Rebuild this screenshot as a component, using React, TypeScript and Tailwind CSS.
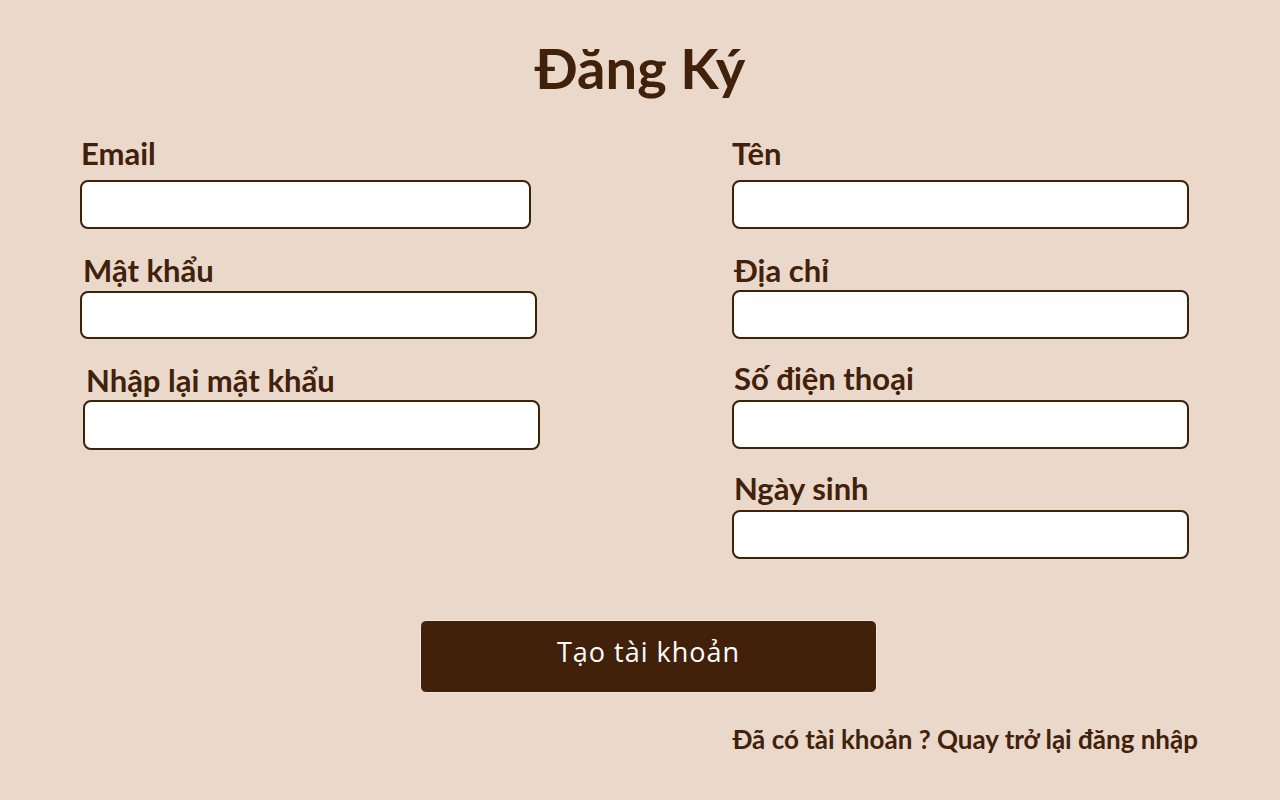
const leftFields = [
  { label: "Email", labelCls: "ml-[1px]", inputCls: "mt-[9px] h-[49px] w-[451px]" },
  { label: "Mật khẩu", labelCls: "mt-[23px] ml-[3px]", inputCls: "mt-[3px] h-[48px] w-[457px]" },
  { label: "Nhập lại mật khẩu", labelCls: "mt-[23px] ml-[6px]", inputCls: "mt-[2px] ml-[3px] h-[50px] w-[457px]" },
];

const rightFields = [
  { label: "Tên", labelCls: "", inputCls: "mt-[9px] h-[49px] w-[457px]" },
  { label: "Địa chỉ", labelCls: "mt-[23px] ml-[2px]", inputCls: "mt-[2px] h-[49px] w-[457px]" },
  { label: "Số điện thoại", labelCls: "mt-[21px] ml-[2px]", inputCls: "mt-[4px] h-[49px] w-[457px]" },
  { label: "Ngày sinh", labelCls: "mt-[21px] ml-[2px]", inputCls: "mt-[4px] h-[49px] w-[457px]" },
];

function Field({ label, labelCls, inputCls }: { label: string; labelCls: string; inputCls: string }) {
  return (
    <>
      <label className={`block text-[31px] font-bold leading-[36px] ${labelCls}`}>{label}</label>
      <input
        type="text"
        className={`block rounded-[8px] border-2 border-[#3f2108] bg-white px-3 outline-none ${inputCls}`}
      />
    </>
  );
}

export default function App() {
  return (
    <div className="min-h-screen bg-[#ead8ca] font-['Lato','Liberation_Sans',sans-serif] text-[#42210b]">
      <h1 className="pt-[37px] text-center text-[56px] font-bold leading-[62px]">Đăng Ký</h1>

      <div className="mt-[36px] flex pl-[80px]">
        <div className="flex w-[460px] flex-col items-start">
          {leftFields.map((f) => (
            <Field key={f.label} {...f} />
          ))}
        </div>
        <div className="ml-[192px] flex w-[457px] flex-col items-start">
          {rightFields.map((f) => (
            <Field key={f.label} {...f} />
          ))}
        </div>
      </div>

      <button className="ml-[420px] mt-[61px] flex h-[73px] w-[457px] items-center justify-center rounded-[6px] border border-[#f3e6da] bg-[#42210b] pb-[8px] font-['Open_Sans',sans-serif] text-[27px] font-medium tracking-[1px] text-white">
        Tạo tài khoản
      </button>

      <p className="mt-[31px] pr-[82px] text-right text-[26px] font-bold leading-[30px]">
        Đã có tài khoản ? Quay trở lại đăng nhập
      </p>
    </div>
  );
}
